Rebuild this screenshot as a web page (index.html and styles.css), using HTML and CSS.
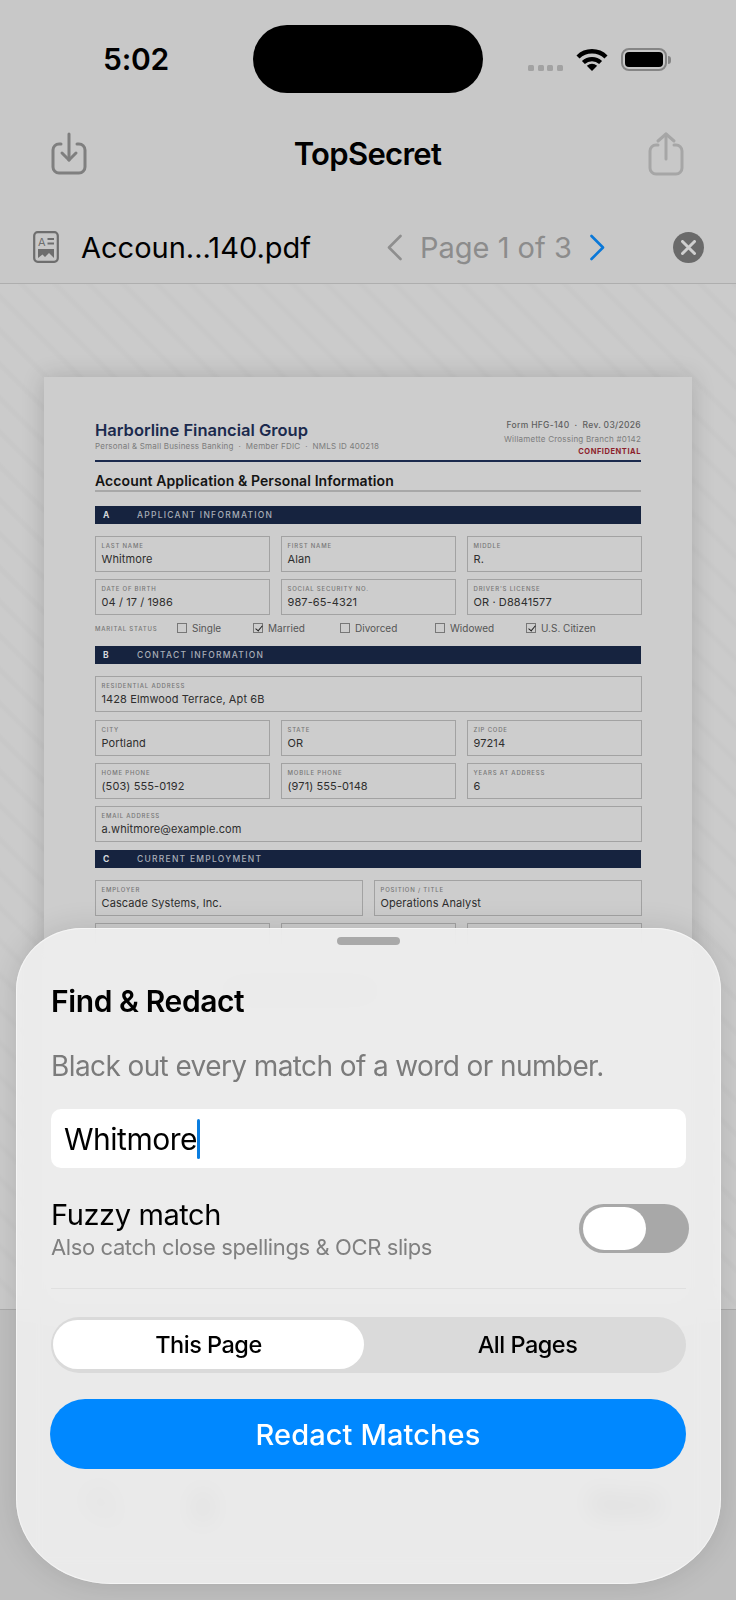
FILE: index.html

```html
<!DOCTYPE html>
<html lang="en">
<head>
    <meta charset="UTF-8">
    <meta name="viewport" content="width=device-width, initial-scale=1.0">
    <title>TopSecret</title>
    <link rel="stylesheet" href="styles.css">
</head>
<body>
    <div class="screen">
        <div class="status-bar">
            <span class="time">5:02</span>
            <div class="island"></div>
            <div class="status-icons">
                <div class="signal"><i></i><i></i><i></i><i></i></div>
                <svg class="wifi" width="32" height="23" viewBox="0 0 32 23">
                    <path d="M2 9 A20 20 0 0 1 30 9" fill="none" stroke="#000" stroke-width="4.4"/>
                    <path d="M7.4 14.6 A12.2 12.2 0 0 1 24.6 14.6" fill="none" stroke="#000" stroke-width="4.2"/>
                    <path d="M16 23 L10.8 17.8 Q16 13.6 21.2 17.8 Z" fill="#000"/>
                </svg>
                <div class="battery"><div class="battery-fill"></div></div>
                <div class="battery-cap"></div>
            </div>
        </div>

        <div class="toolbar">
            <svg width="36" height="44" viewBox="0 0 36 44" fill="none" stroke="#7f7f7f" stroke-width="3" stroke-linecap="round" stroke-linejoin="round">
                <path d="M10 12 H8 A6 6 0 0 0 2 18 V35 A6 6 0 0 0 8 41 H28 A6 6 0 0 0 34 35 V18 A6 6 0 0 0 28 12 H26"/>
                <path d="M18 2 V28"/>
                <path d="M11 21 L18 28 L25 21"/>
            </svg>
            <span class="app-title">TopSecret</span>
            <svg width="36" height="44" viewBox="0 0 36 44" fill="none" stroke="#a6a6a6" stroke-width="3" stroke-linecap="round" stroke-linejoin="round">
                <path d="M10 13 H8 A6 6 0 0 0 2 19 V36 A6 6 0 0 0 8 42 H28 A6 6 0 0 0 34 36 V19 A6 6 0 0 0 28 13 H26"/>
                <path d="M18 2 V27"/>
                <path d="M10 9 L18 2 L26 9"/>
            </svg>
        </div>

        <div class="file-bar">
            <svg class="doc-icon" width="26" height="32" viewBox="0 0 26 32">
                <rect x="1.2" y="1.2" width="23.6" height="29.6" rx="3.5" fill="none" stroke="#6e6e6e" stroke-width="2.2"/>
                <text x="5" y="14.5" font-size="11" font-family="Inter, sans-serif" fill="#6e6e6e">A</text>
                <path d="M14.5 8 H21 M14.5 12.5 H21" stroke="#6e6e6e" stroke-width="1.8"/>
                <path d="M5 18 H21 V27 L16 22 L12 26 L9.5 23.5 L5 27 Z" fill="#6e6e6e"/>
            </svg>
            <span class="file-name">Accoun...140.pdf</span>
            <svg class="chev-left" width="17" height="27" viewBox="0 0 17 27" fill="none" stroke="#8e8e8e" stroke-width="2.6" stroke-linecap="round" stroke-linejoin="round">
                <path d="M14.5 2 L3 13.5 L14.5 25"/>
            </svg>
            <span class="page-label">Page 1 of 3</span>
            <svg class="chev-right" width="17" height="27" viewBox="0 0 17 27" fill="none" stroke="#0a78d8" stroke-width="2.6" stroke-linecap="round" stroke-linejoin="round">
                <path d="M2.5 2 L14 13.5 L2.5 25"/>
            </svg>
            <div class="close-btn">
                <svg width="15" height="15" viewBox="0 0 15 15" fill="none" stroke="#cfcfcf" stroke-width="3" stroke-linecap="round">
                    <path d="M1.5 1.5 L13.5 13.5 M13.5 1.5 L1.5 13.5"/>
                </svg>
            </div>
        </div>

        <div class="canvas">
            <div class="paper">
                <div class="paper-head">
                    <div>
                        <div class="bank-name">Harborline Financial Group</div>
                        <div class="bank-sub">Personal &amp; Small Business Banking &nbsp;·&nbsp; Member FDIC &nbsp;·&nbsp; NMLS ID 400218</div>
                    </div>
                    <div class="form-meta">
                        <div class="meta-form">Form HFG-140 &nbsp;·&nbsp; Rev. 03/2026</div>
                        <div class="meta-branch">Willamette Crossing Branch #0142</div>
                        <div class="meta-conf">CONFIDENTIAL</div>
                    </div>
                </div>
                <div class="doc-title">Account Application &amp; Personal Information</div>

                <div class="band band-first"><span class="band-letter">A</span>APPLICANT INFORMATION</div>
                <div class="rows">
                    <div class="row-3">
                        <div class="field"><label>LAST NAME</label><span>Whitmore</span></div>
                        <div class="field"><label>FIRST NAME</label><span>Alan</span></div>
                        <div class="field"><label>MIDDLE</label><span>R.</span></div>
                    </div>
                    <div class="row-3">
                        <div class="field"><label>DATE OF BIRTH</label><span>04 / 17 / 1986</span></div>
                        <div class="field"><label>SOCIAL SECURITY NO.</label><span>987-65-4321</span></div>
                        <div class="field"><label>DRIVER'S LICENSE</label><span>OR · D8841577</span></div>
                    </div>
                </div>
                <div class="marital">
                    <span class="marital-label">MARITAL STATUS</span>
                    <span class="check check-single"><i class="box"></i>Single</span>
                    <span class="check check-married"><i class="box on"></i>Married</span>
                    <span class="check check-divorced"><i class="box"></i>Divorced</span>
                    <span class="check check-widowed"><i class="box"></i>Widowed</span>
                    <span class="check"><i class="box on"></i>U.S. Citizen</span>
                </div>

                <div class="band"><span class="band-letter">B</span>CONTACT INFORMATION</div>
                <div class="rows">
                    <div class="field"><label>RESIDENTIAL ADDRESS</label><span>1428 Elmwood Terrace, Apt 6B</span></div>
                    <div class="row-3">
                        <div class="field"><label>CITY</label><span>Portland</span></div>
                        <div class="field"><label>STATE</label><span>OR</span></div>
                        <div class="field"><label>ZIP CODE</label><span>97214</span></div>
                    </div>
                    <div class="row-3">
                        <div class="field"><label>HOME PHONE</label><span>(503) 555-0192</span></div>
                        <div class="field"><label>MOBILE PHONE</label><span>(971) 555-0148</span></div>
                        <div class="field"><label>YEARS AT ADDRESS</label><span>6</span></div>
                    </div>
                    <div class="field"><label>EMAIL ADDRESS</label><span>a.whitmore@example.com</span></div>
                </div>

                <div class="band"><span class="band-letter">C</span>CURRENT EMPLOYMENT</div>
                <div class="rows">
                    <div class="row-2">
                        <div class="field"><label>EMPLOYER</label><span>Cascade Systems, Inc.</span></div>
                        <div class="field"><label>POSITION / TITLE</label><span>Operations Analyst</span></div>
                    </div>
                    <div class="row-3">
                        <div class="field"></div>
                        <div class="field"></div>
                        <div class="field"></div>
                    </div>
                </div>
                <div class="hidden-line"></div>
            </div>
        </div>

        <div class="bottom-bar">
            <svg width="36" height="44" viewBox="0 0 36 44" fill="none" stroke="#6a6a6a" stroke-width="5">
                <circle cx="15" cy="15" r="11"/>
                <path d="M23 24 L33 38"/>
            </svg>
            <svg class="pen" width="26" height="44" viewBox="0 0 26 44" fill="#6a6a6a">
                <path d="M8 4 H18 L24 28 L13 42 L2 28 Z"/>
            </svg>
            <span class="save">Save</span>
        </div>

        <div class="sheet">
            <div class="handle"></div>
            <div class="sheet-title">Find &amp; Redact</div>
            <div class="sheet-sub">Black out every match of a word or number.</div>
            <div class="search-box"><span>Whitmore</span><i class="caret"></i></div>
            <div class="fuzzy">
                <div>
                    <div class="fuzzy-title">Fuzzy match</div>
                    <div class="fuzzy-sub">Also catch close spellings &amp; OCR slips</div>
                </div>
                <div class="toggle"><div class="thumb"></div></div>
            </div>
            <div class="divider"></div>
            <div class="segment">
                <div class="seg-item seg-active">This Page</div>
                <div class="seg-item seg-other">All Pages</div>
            </div>
            <div class="redact-btn">Redact Matches</div>
        </div>
    </div>
</body>
</html>
```

FILE: styles.css

```css
body {
    margin: 0;
    padding: 0;
    background-color: #c8c8c8;
    font-family: Inter, "Noto Sans", sans-serif;
}
.screen {
    position: relative;
    width: 736px;
    height: 1600px;
    overflow: hidden;
    display: flex;
    flex-direction: column;
    background-color: #c8c8c8;
}

/* status bar */
.status-bar {
    height: 105px;
    flex-shrink: 0;
    position: relative;
}
.time {
    position: absolute;
    left: 103px;
    top: 41px;
    font-size: 30px;
    line-height: 36px;
    font-weight: 600;
    letter-spacing: -0.2px;
    color: #000;
}
.island {
    position: absolute;
    left: 253px;
    top: 25px;
    width: 230px;
    height: 68px;
    border-radius: 34px;
    background-color: #000;
}
.status-icons {
    position: absolute;
    left: 528px;
    top: 48px;
    display: flex;
    align-items: flex-start;
}
.signal {
    display: flex;
    gap: 3.5px;
    margin-top: 17px;
    margin-right: 13px;
}
.signal i {
    width: 6px;
    height: 6px;
    border-radius: 1.5px;
    background-color: #a2a2a2;
}
.battery {
    margin-left: 13px;
    width: 46px;
    height: 23px;
    box-sizing: border-box;
    border: 2px solid #858585;
    border-radius: 8px;
    padding: 2px;
}
.battery-fill {
    height: 100%;
    border-radius: 4px;
    background-color: #000;
}
.battery-cap {
    width: 3px;
    height: 8px;
    margin-top: 7.5px;
    margin-left: 1px;
    border-radius: 0 3px 3px 0;
    background-color: #858585;
}

/* top toolbar */
.toolbar {
    height: 97px;
    flex-shrink: 0;
    display: flex;
    align-items: center;
    justify-content: space-between;
    padding: 0 52px 0 51px;
    box-sizing: border-box;
}
.app-title {
    font-size: 31px;
    font-weight: 600;
    letter-spacing: -0.7px;
    color: #000;
}

/* file bar */
.file-bar {
    height: 82px;
    flex-shrink: 0;
    box-sizing: border-box;
    border-bottom: 1px solid #aeaeae;
    display: flex;
    align-items: center;
    padding: 13px 32px 4px 33px;
}
.file-name {
    margin-left: 22px;
    width: 305px;
    font-size: 29px;
    letter-spacing: 0;
    color: #000;
    white-space: nowrap;
}
.page-label {
    margin-left: 17px;
    width: 153px;
    font-size: 29px;
    letter-spacing: 0;
    color: #8c8c8c;
    white-space: nowrap;
}
.chev-right {
    margin-left: 16px;
}
.close-btn {
    margin-left: auto;
    width: 31px;
    height: 31px;
    border-radius: 50%;
    background-color: #6a6a6a;
    display: flex;
    align-items: center;
    justify-content: center;
}

/* document canvas */
.canvas {
    flex: 1;
    min-height: 0;
    overflow: hidden;
    padding: 93px 44px 0;
    background-color: #cbcbcb;
    background-image: repeating-linear-gradient(45deg, #cbcbcb 0, #cbcbcb 16px, #c8c8c8 19px, #c8c8c8 21px, #cbcbcb 24px);
}
.paper {
    width: 648px;
    height: 1000px;
    box-sizing: border-box;
    padding: 44px 51px 0;
    background-color: #cdcdcd;
    box-shadow: 0 0 22px rgba(0, 0, 0, 0.16);
}
.paper-head {
    display: flex;
    justify-content: space-between;
    height: 39px;
    border-bottom: 2px solid #1b2a4d;
}
.bank-name {
    font-size: 16.5px;
    line-height: 18px;
    font-weight: 600;
    color: #1b2a4d;
}
.bank-sub {
    margin-top: 2px;
    font-size: 8px;
    line-height: 11px;
    letter-spacing: 0.2px;
    color: #7c7c7c;
}
.form-meta {
    text-align: right;
    margin-top: -2px;
}
.meta-form {
    font-size: 8.5px;
    line-height: 12px;
    font-weight: 500;
    letter-spacing: 0.3px;
    color: #5f5f5f;
}
.meta-branch {
    margin-top: 2px;
    font-size: 8px;
    line-height: 12px;
    letter-spacing: 0.22px;
    color: #7c7c7c;
}
.meta-conf {
    margin-top: 1px;
    font-size: 7.5px;
    line-height: 12px;
    font-weight: 700;
    letter-spacing: 0.55px;
    color: #8c1f2c;
}
.doc-title {
    margin-top: 10px;
    height: 18px;
    font-size: 14px;
    line-height: 18px;
    font-weight: 600;
    letter-spacing: 0.1px;
    color: #141414;
    border-bottom: 2px solid #a8a8a8;
}
.band {
    margin-top: 8px;
    height: 18px;
    display: flex;
    align-items: center;
    background-color: #16233f;
    font-size: 8.5px;
    font-weight: 500;
    letter-spacing: 1.25px;
    color: #a9aeb8;
}
.band-first {
    margin-top: 14px;
}
.band-letter {
    width: 42px;
    padding-left: 8px;
    box-sizing: border-box;
    font-weight: 700;
    color: #d5d7db;
}
.rows {
    margin-top: 12px;
    display: flex;
    flex-direction: column;
    gap: 7.3px;
}
.row-3 {
    display: grid;
    grid-template-columns: repeat(3, 1fr);
    gap: 12px;
}
.row-2 {
    display: grid;
    grid-template-columns: repeat(2, 1fr);
    gap: 12px;
}
.field {
    height: 36px;
    box-sizing: border-box;
    margin: 0 -0.5px;
    border: 1.5px solid #a2a2a2;
    padding: 5px 6px 0;
}
.field label {
    display: block;
    font-size: 6px;
    line-height: 8px;
    font-weight: 500;
    letter-spacing: 0.8px;
    color: #777;
}
.field span {
    display: block;
    margin-top: 1px;
    font-size: 11px;
    line-height: 16px;
    letter-spacing: 0.1px;
    color: #2e2e2e;
}
.marital {
    height: 20px;
    margin-top: 3px;
    display: flex;
    align-items: center;
    font-size: 10px;
    color: #555;
}
.marital-label {
    width: 82px;
    font-size: 6px;
    font-weight: 500;
    letter-spacing: 0.8px;
    color: #777;
}
.check {
    display: flex;
    align-items: center;
    gap: 5px;
}
.check-single {
    width: 76px;
}
.check-married {
    width: 87px;
}
.check-divorced {
    width: 95px;
}
.check-widowed {
    width: 91px;
}
.box {
    position: relative;
    width: 10px;
    height: 10px;
    box-sizing: border-box;
    border: 1px solid #777;
}
.box.on::after {
    content: "";
    position: absolute;
    left: 2.5px;
    top: 0;
    width: 3px;
    height: 6px;
    border: solid #222;
    border-width: 0 1.3px 1.3px 0;
    transform: rotate(40deg);
}
.hidden-line {
    margin: 28px 0 0 130px;
    width: 150px;
    height: 8px;
    background-color: #9a9a9a;
}

/* bottom toolbar, covered by the sheet */
.bottom-bar {
    height: 291px;
    flex-shrink: 0;
    box-sizing: border-box;
    border-top: 1px solid #ababab;
    background-color: #bfbfbf;
    display: flex;
    align-items: flex-start;
    padding: 175px 76px 0 84px;
}
.pen {
    margin-left: 70px;
}
.save {
    margin-left: auto;
    font-size: 30px;
    font-weight: 600;
    color: #000;
}

/* find and redact sheet */
.sheet {
    position: absolute;
    left: 16px;
    top: 928px;
    width: 705px;
    height: 656px;
    box-sizing: border-box;
    padding: 9px 35px 0 35px;
    border-radius: 66px 66px 95px 95px / 62px 62px 85px 85px;
    background-color: rgba(240, 240, 240, 0.88);
    backdrop-filter: blur(12px);
    box-shadow: 0 0 30px rgba(0, 0, 0, 0.12), inset 0 0 0 1px rgba(255, 255, 255, 0.5);
}
.handle {
    width: 63px;
    height: 8px;
    margin: 0 auto;
    border-radius: 4px;
    background-color: #a9a9a9;
}
.sheet-title {
    margin-top: 38px;
    font-size: 30px;
    line-height: 36px;
    font-weight: 600;
    letter-spacing: -0.4px;
    color: #000;
}
.sheet-sub {
    margin-top: 29px;
    font-size: 28px;
    line-height: 36px;
    letter-spacing: -0.6px;
    color: #7b7b7b;
}
.search-box {
    margin-top: 25px;
    height: 59px;
    box-sizing: border-box;
    padding-left: 13px;
    display: flex;
    align-items: center;
    background-color: #fff;
    border-radius: 10px;
    font-size: 30px;
    letter-spacing: -0.5px;
    color: #000;
}
.caret {
    width: 3.5px;
    height: 40px;
    border-radius: 2px;
    background-color: #0a7de0;
}
.fuzzy {
    margin-top: 36px;
    height: 49px;
    display: flex;
    justify-content: space-between;
    align-items: center;
}
.fuzzy-title {
    margin-top: 2px;
    font-size: 29px;
    line-height: 34px;
    letter-spacing: -0.4px;
    color: #000;
}
.fuzzy-sub {
    margin-top: 1px;
    font-size: 22px;
    line-height: 28px;
    letter-spacing: -0.4px;
    color: #808080;
}
.toggle {
    width: 110px;
    height: 49px;
    margin-right: -3px;
    box-sizing: border-box;
    padding: 3px 4px;
    border-radius: 25px;
    background-color: #a8a8a8;
}
.thumb {
    width: 63px;
    height: 43px;
    border-radius: 22px;
    background-color: #fff;
}
.divider {
    margin-top: 35px;
    height: 1px;
    background-color: #e0e0e0;
}
.segment {
    margin-top: 28px;
    height: 56px;
    box-sizing: border-box;
    padding: 3px 0 4px 2px;
    display: flex;
    border-radius: 28px;
    background-color: #dadada;
}
.seg-item {
    display: flex;
    align-items: center;
    justify-content: center;
    font-size: 23.5px;
    font-weight: 500;
    letter-spacing: -0.5px;
    color: #000;
}
.seg-active {
    width: 311px;
    background-color: #fff;
    border-radius: 25px;
}
.seg-other {
    flex: 1;
    padding-left: 5px;
}
.redact-btn {
    margin: 26px 0 0 -1px;
    height: 70px;
    display: flex;
    align-items: center;
    justify-content: center;
    border-radius: 35px;
    background-color: #0088ff;
    font-size: 29px;
    font-weight: 500;
    letter-spacing: 0.1px;
    color: #fff;
}
```
